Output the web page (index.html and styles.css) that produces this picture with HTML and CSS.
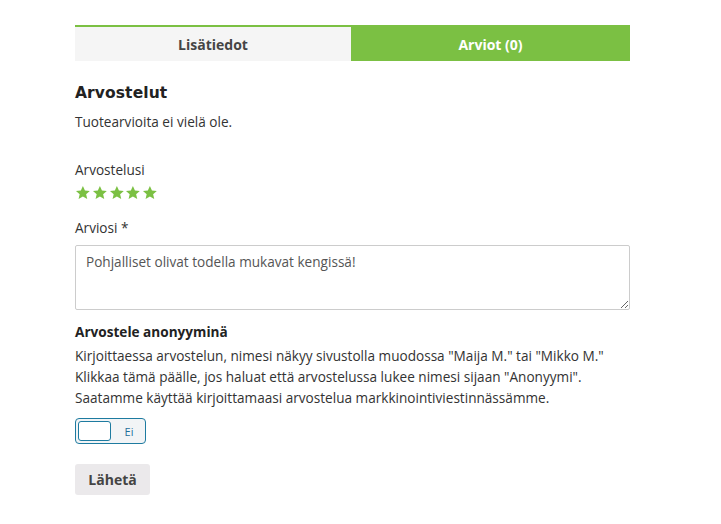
FILE: index.html
```html
<!DOCTYPE html>
<html lang="fi">
<head>
<meta charset="utf-8">
<link rel="stylesheet" href="styles.css">
</head>
<body>
<div class="wrap">
  <div class="tabs">
    <div class="tab">Lisätiedot</div>
    <div class="tab active">Arviot (0)</div>
  </div>
  <h2 class="title">Arvostelut</h2>
  <p class="empty">Tuotearvioita ei vielä ole.</p>
  <div class="label rating-label">Arvostelusi</div>
  <div class="stars">
    <svg viewBox="0 0 24 24"><path d="M12 1.5l3.1 7 7.4.6-5.6 4.9 1.7 7.4L12 17.4 5.4 21.4l1.7-7.4L1.5 9.1l7.4-.6z"/></svg>
    <svg viewBox="0 0 24 24"><path d="M12 1.5l3.1 7 7.4.6-5.6 4.9 1.7 7.4L12 17.4 5.4 21.4l1.7-7.4L1.5 9.1l7.4-.6z"/></svg>
    <svg viewBox="0 0 24 24"><path d="M12 1.5l3.1 7 7.4.6-5.6 4.9 1.7 7.4L12 17.4 5.4 21.4l1.7-7.4L1.5 9.1l7.4-.6z"/></svg>
    <svg viewBox="0 0 24 24"><path d="M12 1.5l3.1 7 7.4.6-5.6 4.9 1.7 7.4L12 17.4 5.4 21.4l1.7-7.4L1.5 9.1l7.4-.6z"/></svg>
    <svg viewBox="0 0 24 24"><path d="M12 1.5l3.1 7 7.4.6-5.6 4.9 1.7 7.4L12 17.4 5.4 21.4l1.7-7.4L1.5 9.1l7.4-.6z"/></svg>
  </div>
  <div class="label">Arviosi *</div>
  <textarea class="review">Pohjalliset olivat todella mukavat kengissä!</textarea>
  <div class="anon-title">Arvostele anonyyminä</div>
  <p class="anon-text">Kirjoittaessa arvostelun, nimesi näkyy sivustolla muodossa "Maija M." tai "Mikko M."<br>Klikkaa tämä päälle, jos haluat että arvostelussa lukee nimesi sijaan "Anonyymi".<br>Saatamme käyttää kirjoittamaasi arvostelua markkinointiviestinnässämme.</p>
  <div class="toggle"><span class="knob"></span><span class="toggle-text">Ei</span></div>
  <button class="submit">Lähetä</button>
</div>
</body>
</html>
```
FILE: styles.css
```css
html, body { margin: 0; padding: 0; background: #fff; }
body { font-family: "Open Sans", "Liberation Sans", sans-serif; color: #333; font-size: 13.6px; }
.wrap { width: 555px; margin-left: 75px; padding-top: 25px; }
.tabs { display: flex; border-top: 2px solid #7bc043; }
.tab { flex: 0 0 276px; height: 34px; display: flex; align-items: center; justify-content: center; background: #f5f5f5; color: #454545; font-weight: 700; font-size: 14px; }
.tab.active { flex: 1; background: #7bc043; color: #fff; }
.title { margin: 21px 0 0; font-family: "DejaVu Sans", sans-serif; font-size: 15.5px; font-weight: 700; color: #222; line-height: 22px; letter-spacing: 0.1px; }
.empty { margin: 8px 0 0; line-height: 20px; color: #333; }
.label { line-height: 20px; color: #333; margin-top: 16px; }
.rating-label { margin-top: 28px; }
.stars { display: flex; gap: 1px; margin-top: 4px; height: 18px; align-items: center; }
.stars svg { width: 15.8px; height: 15.8px; fill: #7bc043; }
.review { display: block; box-sizing: border-box; width: 555px; height: 65px; margin-top: 7px; padding: 6px 10px; border: 1px solid #ccc; border-radius: 2px; font-family: "Open Sans", "Liberation Sans", sans-serif; font-size: 13.6px; color: #555; line-height: 20px; resize: vertical; background: #fff; }
.anon-title { margin-top: 12px; font-weight: 700; color: #222; line-height: 20px; font-size: 13.6px; }
.anon-text { margin: 3px 0 0; line-height: 21px; color: #333; }
.toggle { box-sizing: border-box; width: 71px; height: 26px; margin-top: 10px; border: 1.5px solid #1e7ba0; border-radius: 4px; background: #f2f4f6; display: flex; align-items: center; padding: 0 2px; }
.knob { box-sizing: border-box; width: 33px; height: 20px; border: 1.5px solid #1e7ba0; border-radius: 3px; background: #fff; }
.toggle-text { flex: 1; text-align: center; font-size: 11px; color: #1e6f9a; padding-left: 4px; }
.submit { display: block; margin-top: 20px; width: 75px; height: 31px; border: 0; border-radius: 3px; background: #ebe9eb; font-family: "Open Sans", "Liberation Sans", sans-serif; font-weight: 700; font-size: 14px; color: #444; padding: 0; }
```
